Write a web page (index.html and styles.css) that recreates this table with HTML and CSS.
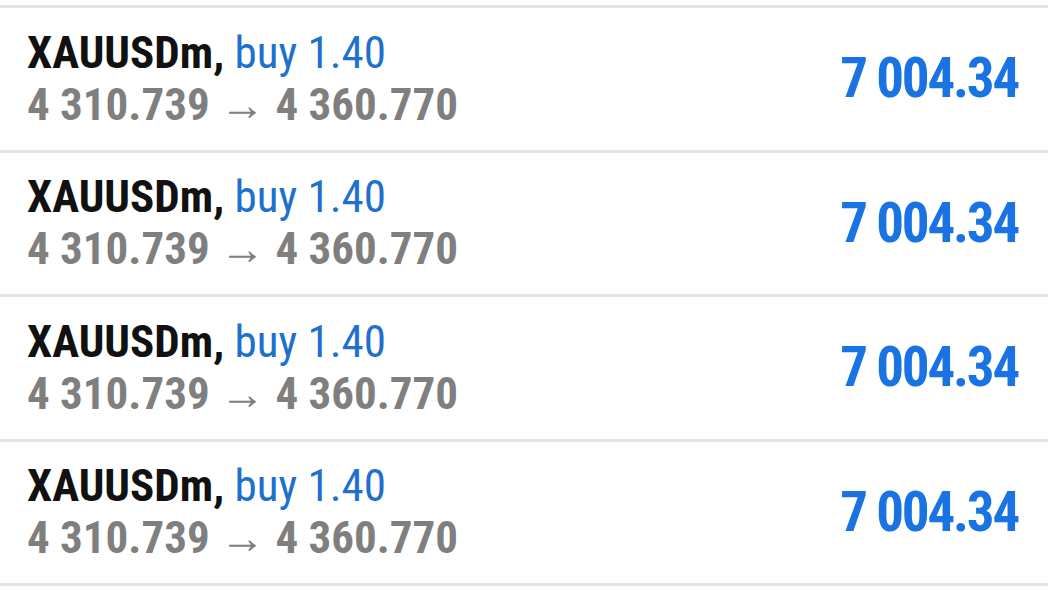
FILE: index.html
```html
<!DOCTYPE html>
<html lang="en">
<head>
    <meta charset="UTF-8">
    <meta name="viewport" content="width=device-width, initial-scale=1.0">
    <title>Trades</title>
    <link rel="stylesheet" href="styles.css">
</head>
<body>
    <div class="trades">
        <div class="trade">
            <div class="info">
                <div class="title"><span class="symbol">XAUUSDm,</span> <span class="side">buy 1.40</span></div>
                <div class="prices">4 310.739 <span class="arrow">→</span> 4 360.770</div>
            </div>
            <div class="profit">7 004.34</div>
        </div>
        <div class="trade">
            <div class="info">
                <div class="title"><span class="symbol">XAUUSDm,</span> <span class="side">buy 1.40</span></div>
                <div class="prices">4 310.739 <span class="arrow">→</span> 4 360.770</div>
            </div>
            <div class="profit">7 004.34</div>
        </div>
        <div class="trade">
            <div class="info">
                <div class="title"><span class="symbol">XAUUSDm,</span> <span class="side">buy 1.40</span></div>
                <div class="prices">4 310.739 <span class="arrow">→</span> 4 360.770</div>
            </div>
            <div class="profit">7 004.34</div>
        </div>
        <div class="trade">
            <div class="info">
                <div class="title"><span class="symbol">XAUUSDm,</span> <span class="side">buy 1.40</span></div>
                <div class="prices">4 310.739 <span class="arrow">→</span> 4 360.770</div>
            </div>
            <div class="profit">7 004.34</div>
        </div>
    </div>
</body>
</html>
```
FILE: styles.css
```css
body {
    margin: 0;
    padding: 0;
    background: #ffffff;
    font-family: "Roboto Condensed", Roboto, sans-serif;
}
.trades {
    margin-top: 5px;
    border-top: 3px solid #e4e4e4;
}
.trade {
    display: flex;
    align-items: center;
    justify-content: space-between;
    height: 141.5px;
    padding: 0 30px 0 27px;
    border-bottom: 3px solid #e4e4e4;
}
.info {
    font-size: 45px;
    line-height: 52px;
}
.symbol {
    font-weight: bold;
    color: #111111;
}
.side {
    color: #1f6fcf;
}
.prices {
    font-weight: bold;
    color: #7f7f7f;
}
.arrow {
    font-weight: normal;
    font-family: Roboto, sans-serif;
    font-size: 45px;
}
.profit {
    font-size: 55px;
    line-height: 1;
    font-weight: bold;
    letter-spacing: -2.2px;
    color: #1a73e3;
}
```
